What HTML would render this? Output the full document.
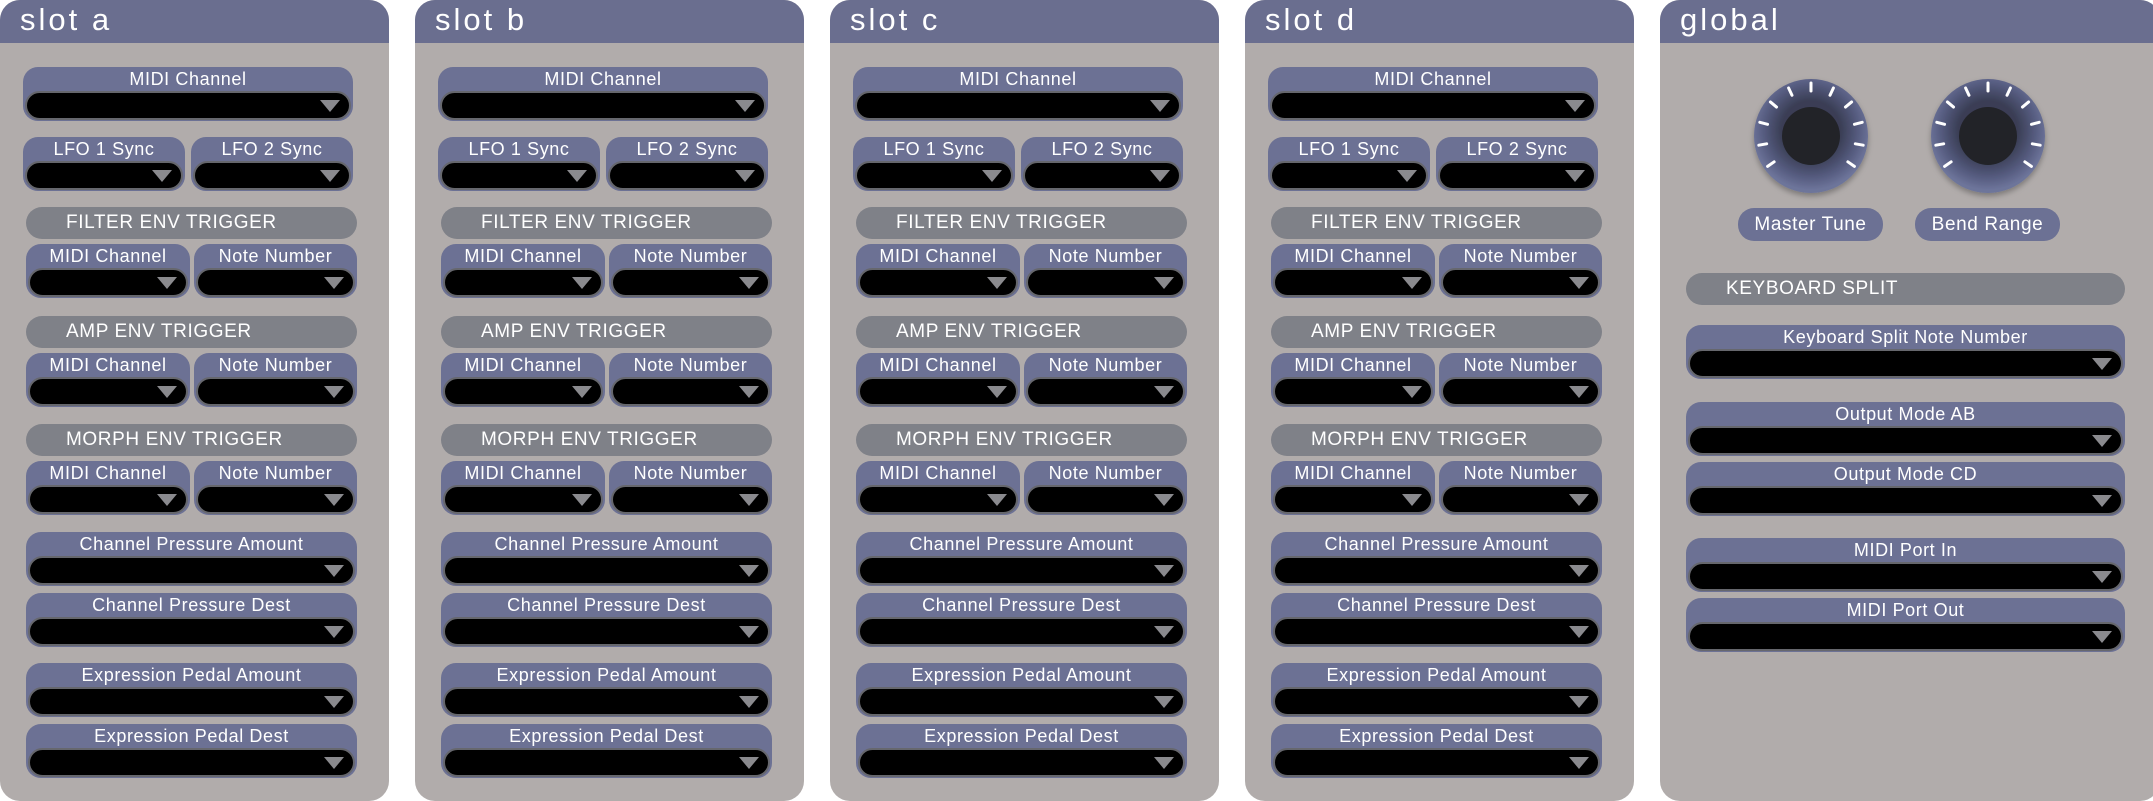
<!DOCTYPE html>
<html><head><meta charset="utf-8"><style>
*{margin:0;padding:0;box-sizing:border-box}
body{width:2153px;height:801px;background:#fff;position:relative;overflow:hidden;font-family:"Liberation Sans",sans-serif}
.p{position:absolute;top:0;width:389px;height:801px;background:#b1acab;border-radius:20px;overflow:hidden}
.h{position:absolute;left:0;top:0;right:0;height:43px;background:#6a6e8f;color:#fff;font-size:31px;padding-left:20px;line-height:40px;letter-spacing:3px}
.w{position:absolute;height:54px;background:#6c7194;border-radius:15px;color:#fff;font-size:18px;text-align:center;line-height:24px;letter-spacing:0.6px}
.w .b{position:absolute;left:2px;right:2px;bottom:1px;height:29px;background:#000;border:2px solid #66676d;border-radius:15px}
.w .b:after{content:"";position:absolute;right:9px;top:7px;border-left:10px solid transparent;border-right:10px solid transparent;border-top:12px solid #8a8a8e}
.g{position:absolute;height:32px;background:#7f8188;border-radius:16px;color:#fff;font-size:19px;line-height:32px;padding-left:40px;letter-spacing:0.6px}
.k{position:absolute;height:33px;background:#6c7194;border-radius:16px;color:#fff;font-size:19px;line-height:33px;text-align:center;letter-spacing:0.6px}
</style></head><body>

<div class="p" style="left:0"><div class="h">slot a</div>
<div class="w" style="left:23px;top:67px;width:330px">MIDI Channel<div class="b"></div></div>
<div class="w" style="left:23px;top:137px;width:162px">LFO 1 Sync<div class="b"></div></div>
<div class="w" style="left:191px;top:137px;width:162px">LFO 2 Sync<div class="b"></div></div>
<div class="g" style="left:26px;top:207px;width:331px">FILTER ENV TRIGGER</div>
<div class="w" style="left:26px;top:244px;width:164px">MIDI Channel<div class="b"></div></div>
<div class="w" style="left:194px;top:244px;width:163px">Note Number<div class="b"></div></div>
<div class="g" style="left:26px;top:316px;width:331px">AMP ENV TRIGGER</div>
<div class="w" style="left:26px;top:353px;width:164px">MIDI Channel<div class="b"></div></div>
<div class="w" style="left:194px;top:353px;width:163px">Note Number<div class="b"></div></div>
<div class="g" style="left:26px;top:424px;width:331px">MORPH ENV TRIGGER</div>
<div class="w" style="left:26px;top:461px;width:164px">MIDI Channel<div class="b"></div></div>
<div class="w" style="left:194px;top:461px;width:163px">Note Number<div class="b"></div></div>
<div class="w" style="left:26px;top:532px;width:331px">Channel Pressure Amount<div class="b"></div></div>
<div class="w" style="left:26px;top:593px;width:331px">Channel Pressure Dest<div class="b"></div></div>
<div class="w" style="left:26px;top:663px;width:331px">Expression Pedal Amount<div class="b"></div></div>
<div class="w" style="left:26px;top:724px;width:331px">Expression Pedal Dest<div class="b"></div></div>
</div>

<div class="p" style="left:415px"><div class="h">slot b</div>
<div class="w" style="left:23px;top:67px;width:330px">MIDI Channel<div class="b"></div></div>
<div class="w" style="left:23px;top:137px;width:162px">LFO 1 Sync<div class="b"></div></div>
<div class="w" style="left:191px;top:137px;width:162px">LFO 2 Sync<div class="b"></div></div>
<div class="g" style="left:26px;top:207px;width:331px">FILTER ENV TRIGGER</div>
<div class="w" style="left:26px;top:244px;width:164px">MIDI Channel<div class="b"></div></div>
<div class="w" style="left:194px;top:244px;width:163px">Note Number<div class="b"></div></div>
<div class="g" style="left:26px;top:316px;width:331px">AMP ENV TRIGGER</div>
<div class="w" style="left:26px;top:353px;width:164px">MIDI Channel<div class="b"></div></div>
<div class="w" style="left:194px;top:353px;width:163px">Note Number<div class="b"></div></div>
<div class="g" style="left:26px;top:424px;width:331px">MORPH ENV TRIGGER</div>
<div class="w" style="left:26px;top:461px;width:164px">MIDI Channel<div class="b"></div></div>
<div class="w" style="left:194px;top:461px;width:163px">Note Number<div class="b"></div></div>
<div class="w" style="left:26px;top:532px;width:331px">Channel Pressure Amount<div class="b"></div></div>
<div class="w" style="left:26px;top:593px;width:331px">Channel Pressure Dest<div class="b"></div></div>
<div class="w" style="left:26px;top:663px;width:331px">Expression Pedal Amount<div class="b"></div></div>
<div class="w" style="left:26px;top:724px;width:331px">Expression Pedal Dest<div class="b"></div></div>
</div>

<div class="p" style="left:830px"><div class="h">slot c</div>
<div class="w" style="left:23px;top:67px;width:330px">MIDI Channel<div class="b"></div></div>
<div class="w" style="left:23px;top:137px;width:162px">LFO 1 Sync<div class="b"></div></div>
<div class="w" style="left:191px;top:137px;width:162px">LFO 2 Sync<div class="b"></div></div>
<div class="g" style="left:26px;top:207px;width:331px">FILTER ENV TRIGGER</div>
<div class="w" style="left:26px;top:244px;width:164px">MIDI Channel<div class="b"></div></div>
<div class="w" style="left:194px;top:244px;width:163px">Note Number<div class="b"></div></div>
<div class="g" style="left:26px;top:316px;width:331px">AMP ENV TRIGGER</div>
<div class="w" style="left:26px;top:353px;width:164px">MIDI Channel<div class="b"></div></div>
<div class="w" style="left:194px;top:353px;width:163px">Note Number<div class="b"></div></div>
<div class="g" style="left:26px;top:424px;width:331px">MORPH ENV TRIGGER</div>
<div class="w" style="left:26px;top:461px;width:164px">MIDI Channel<div class="b"></div></div>
<div class="w" style="left:194px;top:461px;width:163px">Note Number<div class="b"></div></div>
<div class="w" style="left:26px;top:532px;width:331px">Channel Pressure Amount<div class="b"></div></div>
<div class="w" style="left:26px;top:593px;width:331px">Channel Pressure Dest<div class="b"></div></div>
<div class="w" style="left:26px;top:663px;width:331px">Expression Pedal Amount<div class="b"></div></div>
<div class="w" style="left:26px;top:724px;width:331px">Expression Pedal Dest<div class="b"></div></div>
</div>

<div class="p" style="left:1245px"><div class="h">slot d</div>
<div class="w" style="left:23px;top:67px;width:330px">MIDI Channel<div class="b"></div></div>
<div class="w" style="left:23px;top:137px;width:162px">LFO 1 Sync<div class="b"></div></div>
<div class="w" style="left:191px;top:137px;width:162px">LFO 2 Sync<div class="b"></div></div>
<div class="g" style="left:26px;top:207px;width:331px">FILTER ENV TRIGGER</div>
<div class="w" style="left:26px;top:244px;width:164px">MIDI Channel<div class="b"></div></div>
<div class="w" style="left:194px;top:244px;width:163px">Note Number<div class="b"></div></div>
<div class="g" style="left:26px;top:316px;width:331px">AMP ENV TRIGGER</div>
<div class="w" style="left:26px;top:353px;width:164px">MIDI Channel<div class="b"></div></div>
<div class="w" style="left:194px;top:353px;width:163px">Note Number<div class="b"></div></div>
<div class="g" style="left:26px;top:424px;width:331px">MORPH ENV TRIGGER</div>
<div class="w" style="left:26px;top:461px;width:164px">MIDI Channel<div class="b"></div></div>
<div class="w" style="left:194px;top:461px;width:163px">Note Number<div class="b"></div></div>
<div class="w" style="left:26px;top:532px;width:331px">Channel Pressure Amount<div class="b"></div></div>
<div class="w" style="left:26px;top:593px;width:331px">Channel Pressure Dest<div class="b"></div></div>
<div class="w" style="left:26px;top:663px;width:331px">Expression Pedal Amount<div class="b"></div></div>
<div class="w" style="left:26px;top:724px;width:331px">Expression Pedal Dest<div class="b"></div></div>
</div>

<div class="p" style="left:1660px;width:500px"><div class="h">global</div>
<svg style="position:absolute;left:0;top:60px" width="493" height="160">
<defs>
<radialGradient id="kg" cx="50%" cy="45%" r="52%">
<stop offset="0.5" stop-color="#3a3e55"/><stop offset="0.8" stop-color="#565c80"/><stop offset="1" stop-color="#6d749a"/></radialGradient>
<filter id="sh"><feDropShadow dx="0" dy="3" stdDeviation="3" flood-opacity="0.3"/></filter>
<g id="ticks" stroke="#fff" stroke-width="3" stroke-linecap="round">
<line x1="0" y1="-45" x2="0" y2="-53" transform="rotate(-125)"/>
<line x1="0" y1="-45" x2="0" y2="-53" transform="rotate(-100)"/>
<line x1="0" y1="-45" x2="0" y2="-53" transform="rotate(-75)"/>
<line x1="0" y1="-45" x2="0" y2="-53" transform="rotate(-50)"/>
<line x1="0" y1="-45" x2="0" y2="-53" transform="rotate(-25)"/>
<line x1="0" y1="-45" x2="0" y2="-53"/>
<line x1="0" y1="-45" x2="0" y2="-53" transform="rotate(25)"/>
<line x1="0" y1="-45" x2="0" y2="-53" transform="rotate(50)"/>
<line x1="0" y1="-45" x2="0" y2="-53" transform="rotate(75)"/>
<line x1="0" y1="-45" x2="0" y2="-53" transform="rotate(100)"/>
<line x1="0" y1="-45" x2="0" y2="-53" transform="rotate(125)"/>
</g></defs>
<g transform="translate(151,76)"><circle r="57" fill="url(#kg)" filter="url(#sh)"/><circle r="29" fill="#222328"/><use href="#ticks"/></g>
<g transform="translate(328,76)"><circle r="57" fill="url(#kg)" filter="url(#sh)"/><circle r="29" fill="#222328"/><use href="#ticks"/></g>
</svg>
<div class="k" style="left:78px;top:208px;width:145px">Master Tune</div>
<div class="k" style="left:255px;top:208px;width:145px">Bend Range</div>
<div class="g" style="left:26px;top:273px;width:439px">KEYBOARD SPLIT</div>
<div class="w" style="left:26px;top:325px;width:439px">Keyboard Split Note Number<div class="b"></div></div>
<div class="w" style="left:26px;top:402px;width:439px">Output Mode AB<div class="b"></div></div>
<div class="w" style="left:26px;top:462px;width:439px">Output Mode CD<div class="b"></div></div>
<div class="w" style="left:26px;top:538px;width:439px">MIDI Port In<div class="b"></div></div>
<div class="w" style="left:26px;top:598px;width:439px">MIDI Port Out<div class="b"></div></div>
</div>
</body></html>
